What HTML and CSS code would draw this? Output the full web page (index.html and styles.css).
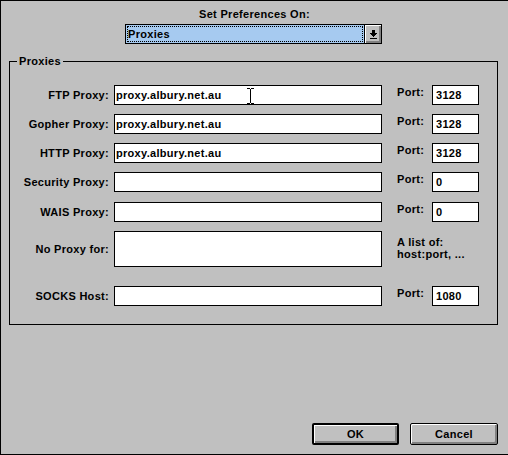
FILE: index.html
```html
<!DOCTYPE html>
<html>
<head>
<meta charset="utf-8">
<title>Set Preferences</title>
<link rel="stylesheet" href="styles.css">
</head>
<body>
<div class="dialog">
  <div class="title">Set Preferences On:</div>
  <div class="combo">
    <div class="combo-field"><span class="combo-focus">Proxies</span></div>
    <div class="combo-btn">
      <svg width="7" height="9" viewBox="0 0 7 9" shape-rendering="crispEdges">
        <rect x="2" y="0" width="3" height="3" fill="#000"/>
        <rect x="0" y="3" width="7" height="1" fill="#000"/>
        <rect x="1" y="4" width="5" height="1" fill="#000"/>
        <rect x="2" y="5" width="3" height="1" fill="#000"/>
        <rect x="3" y="6" width="1" height="1" fill="#000"/>
        <rect x="0" y="8" width="7" height="1" fill="#000"/>
      </svg>
    </div>
  </div>

  <div class="group">
    <div class="group-title">Proxies</div>
    <div class="grid">
      <div class="lbl">FTP Proxy:</div>
      <div class="field has-cursor">proxy.albury.net.au
        <svg class="ibeam" width="7" height="16" viewBox="0 0 7 16" shape-rendering="crispEdges">
          <rect x="0" y="0" width="3" height="1" fill="#000"/>
          <rect x="4" y="0" width="3" height="1" fill="#000"/>
          <rect x="3" y="1" width="1" height="14" fill="#000"/>
          <rect x="0" y="15" width="3" height="1" fill="#000"/>
          <rect x="4" y="15" width="3" height="1" fill="#000"/>
        </svg>
      </div>
      <div class="port-lbl">Port:</div>
      <div class="field port">3128</div>

      <div class="lbl">Gopher Proxy:</div>
      <div class="field">proxy.albury.net.au</div>
      <div class="port-lbl">Port:</div>
      <div class="field port">3128</div>

      <div class="lbl">HTTP Proxy:</div>
      <div class="field">proxy.albury.net.au</div>
      <div class="port-lbl">Port:</div>
      <div class="field port">3128</div>

      <div class="lbl">Security Proxy:</div>
      <div class="field"></div>
      <div class="port-lbl">Port:</div>
      <div class="field port">0</div>

      <div class="lbl">WAIS Proxy:</div>
      <div class="field"></div>
      <div class="port-lbl">Port:</div>
      <div class="field port">0</div>

      <div class="lbl tall">No Proxy for:</div>
      <div class="field tall"></div>
      <div class="hint">A list of:<br>host:port, ...</div>

      <div class="lbl">SOCKS Host:</div>
      <div class="field"></div>
      <div class="port-lbl">Port:</div>
      <div class="field port">1080</div>
    </div>
  </div>

  <div class="buttons">
    <div class="btn default">OK</div>
    <div class="btn">Cancel</div>
  </div>
</div>
</body>
</html>
```

FILE: styles.css
```css
html, body {
  margin: 0;
  padding: 0;
  background: #c0c0c0;
}

.dialog {
  width: 508px;
  height: 455px;
  box-sizing: border-box;
  border: 1px solid #000;
  border-right: none;
  background: #c0c0c0;
  padding-top: 7px;
  font-family: "Liberation Sans", Arial, sans-serif;
  font-weight: bold;
  font-size: 11px;
  line-height: 13px;
  letter-spacing: 0.3px;
  color: #000;
}

.title {
  text-align: center;
}

.combo {
  display: flex;
  width: 257px;
  height: 20px;
  box-sizing: border-box;
  margin: 3px 0 0 124px;
  border: 1px solid #000;
}

.combo-field {
  flex: 1;
  background: #a6caf0;
  padding: 1px;
}

.combo-focus {
  display: block;
  height: 100%;
  box-sizing: border-box;
  border: 1px dotted #000;
  line-height: 14px;
}

.combo-btn {
  width: 16px;
  border-left: 1px solid #000;
  background: #c0c0c0;
  box-shadow: inset 1px 1px #fff, inset -1px -1px #808080, inset -2px -2px #808080;
  display: flex;
  align-items: center;
  justify-content: center;
}

.combo-btn svg {
  display: block;
  margin-left: 0;
}

.group {
  margin: 17px 0 0 8px;
  width: 489px;
  box-sizing: border-box;
  border: 1px solid #000;
  padding: 0 0 18px 6px;
}

.group-title {
  width: fit-content;
  margin: -7px 0 0 1px;
  padding: 0 2px;
  background: #c0c0c0;
}

.grid {
  display: grid;
  grid-template-columns: 98px 268px 50px 47px;
  grid-template-rows: 20px 20px 20px 21px 20px 46px 20px;
  row-gap: 9px;
  align-items: start;
  margin-top: 17px;
}

.lbl {
  height: 20px;
  display: flex;
  align-items: center;
  justify-content: flex-end;
  padding-right: 5px;
  white-space: nowrap;
}

.lbl.tall {
  height: 36px;
}

.field {
  height: 20px;
  box-sizing: border-box;
  border: 1px solid #000;
  background: #fff;
  padding-left: 1px;
  display: flex;
  align-items: center;
  white-space: nowrap;
}

.field.tall {
  height: 36px;
}

.field.port {
  padding-left: 3px;
}

.has-cursor {
  position: relative;
}

.ibeam {
  position: absolute;
  left: 132px;
  top: 2px;
}

.port-lbl {
  padding-left: 15px;
  padding-top: 1px;
}

.hint {
  grid-column: 3 / 5;
  padding: 5px 0 0 15px;
  line-height: 12px;
  white-space: nowrap;
}

.buttons {
  display: flex;
  justify-content: flex-end;
  gap: 11px;
  width: 489px;
  margin: 98px 0 0 8px;
}

.btn {
  height: 22px;
  box-sizing: border-box;
  width: 88px;
  border: 1px solid #000;
  border-radius: 2px;
  background: #c0c0c0;
  box-shadow: inset 1px 1px #fff, inset -1px -1px #808080, inset -2px -2px #808080;
  display: flex;
  align-items: center;
  justify-content: center;
}

.btn.default {
  width: 87px;
  border-width: 2px;
}
```
